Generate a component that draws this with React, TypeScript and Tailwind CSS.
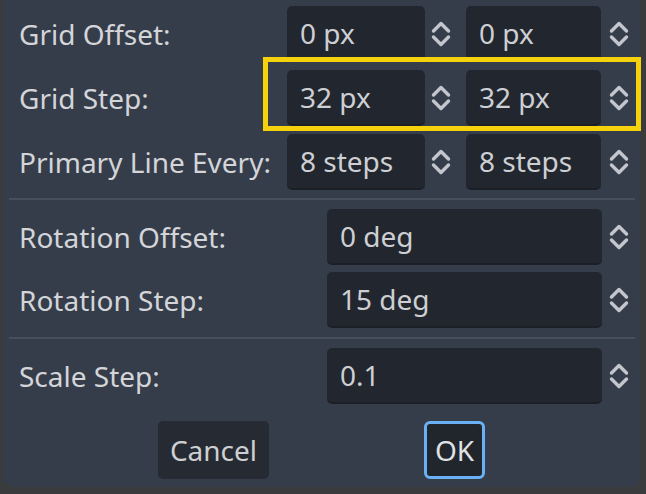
const font = { fontFamily: '"Noto Sans", "Open Sans", sans-serif' };

function UpDown() {
  return (
    <svg width="22" height="28" viewBox="0 0 22 28" fill="none">
      <path d="M3.5 11 L11 3.5 L18.5 11" stroke="#c3c7cd" strokeWidth="3.4" strokeLinecap="round" strokeLinejoin="round" />
      <path d="M3.5 17 L11 24.5 L18.5 17" stroke="#c3c7cd" strokeWidth="3.4" strokeLinecap="round" strokeLinejoin="round" />
    </svg>
  );
}

function SpinBox({ value, fieldW, width }: { value: string; fieldW: string; width: string }) {
  return (
    <div className={`flex h-[56px] ${width}`}>
      <div className={`${fieldW} h-full rounded-[5px] bg-[#22262e] border-b-2 border-[#1c1f25] flex items-center pl-[13px] text-[28px] text-[#cdcfd3]`}>
        {value}
      </div>
      <div className="flex-1 flex items-center justify-center">
        <UpDown />
      </div>
    </div>
  );
}

function Row({ label, children }: { label: string; children: React.ReactNode }) {
  return (
    <div className="flex items-center h-[56px]">
      <div className="text-[28px] text-[#d3d5d9] leading-none">{label}</div>
      <div className="ml-auto flex gap-[9px]">{children}</div>
    </div>
  );
}

function Separator() {
  return <div className="h-[2px] bg-[#474e5c] ml-[6px] mr-[5px]" />;
}

export default function App() {
  return (
    <div className="w-[646px] h-[494px] bg-[#3a3b3d] relative overflow-hidden" style={font}>
      <div className="ml-[3px] w-[637px] h-[487px] bg-[#363d4a] rounded-b-[10px] flex flex-col">
        <div className="pl-[16px] pr-[4px] pt-[6px] flex flex-col gap-[8px]">
          <Row label="Grid Offset:">
            <SpinBox value="0 px" fieldW="w-[138px]" width="w-[170px]" />
            <SpinBox value="0 px" fieldW="w-[135px]" width="w-[170px]" />
          </Row>
          <Row label="Grid Step:">
            <SpinBox value="32 px" fieldW="w-[138px]" width="w-[170px]" />
            <SpinBox value="32 px" fieldW="w-[135px]" width="w-[170px]" />
          </Row>
          <Row label="Primary Line Every:">
            <SpinBox value="8 steps" fieldW="w-[138px]" width="w-[170px]" />
            <SpinBox value="8 steps" fieldW="w-[135px]" width="w-[170px]" />
          </Row>
        </div>
        <div className="mt-[8px]">
          <Separator />
        </div>
        <div className="pl-[16px] pr-[4px] pt-[9px] flex flex-col gap-[7px]">
          <Row label="Rotation Offset:">
            <SpinBox value="0 deg" fieldW="w-[275px]" width="w-[309px]" />
          </Row>
          <Row label="Rotation Step:">
            <SpinBox value="15 deg" fieldW="w-[275px]" width="w-[309px]" />
          </Row>
        </div>
        <div className="mt-[9px]">
          <Separator />
        </div>
        <div className="pl-[16px] pr-[4px] pt-[9px]">
          <Row label="Scale Step:">
            <SpinBox value="0.1" fieldW="w-[275px]" width="w-[309px]" />
          </Row>
        </div>
        <div className="flex justify-evenly items-center mt-[17px]">
          <button className="h-[58px] w-[111px] rounded-[5px] bg-[#262a32] text-[28px] text-[#cdcfd3]">
            Cancel
          </button>
          <button className="h-[58px] w-[61px] rounded-[6px] bg-[#21252c] border-[3px] border-[#69b1f4] text-[28px] text-[#dfe1e4]">
            OK
          </button>
        </div>
      </div>
      <div className="absolute left-[263px] top-[57px] w-[378px] h-[74px] border-[5px] border-[#f5d20c]" />
    </div>
  );
}
